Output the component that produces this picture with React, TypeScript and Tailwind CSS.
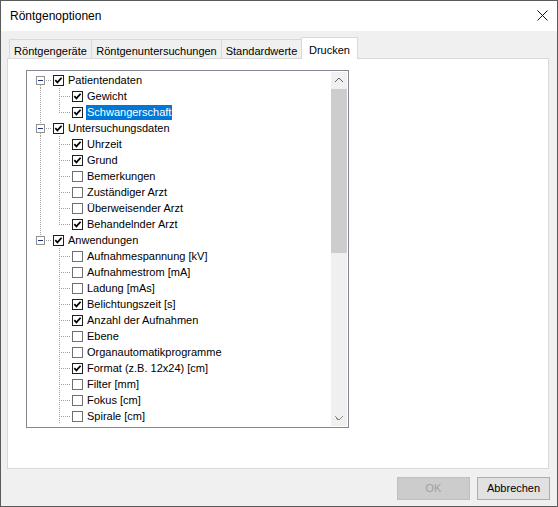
type Node = { label: string; checked: boolean; selected?: boolean; children?: Node[]; more?: boolean };

// The "Anwendungen" list scrolls on below the visible area, so its connector keeps going.
const tree: Node[] = [
  {
    label: 'Patientendaten',
    checked: true,
    children: [
      { label: 'Gewicht', checked: true },
      { label: 'Schwangerschaft', checked: true, selected: true },
    ],
  },
  {
    label: 'Untersuchungsdaten',
    checked: true,
    children: [
      { label: 'Uhrzeit', checked: true },
      { label: 'Grund', checked: true },
      { label: 'Bemerkungen', checked: false },
      { label: 'Zuständiger Arzt', checked: false },
      { label: 'Überweisender Arzt', checked: false },
      { label: 'Behandelnder Arzt', checked: true },
    ],
  },
  {
    label: 'Anwendungen',
    checked: true,
    more: true,
    children: [
      { label: 'Aufnahmespannung [kV]', checked: false },
      { label: 'Aufnahmestrom [mA]', checked: false },
      { label: 'Ladung [mAs]', checked: false },
      { label: 'Belichtungszeit [s]', checked: true },
      { label: 'Anzahl der Aufnahmen', checked: true },
      { label: 'Ebene', checked: false },
      { label: 'Organautomatikprogramme', checked: false },
      { label: 'Format (z.B. 12x24) [cm]', checked: true },
      { label: 'Filter [mm]', checked: false },
      { label: 'Fokus [cm]', checked: false },
      { label: 'Spirale [cm]', checked: false },
    ],
  },
];

const dot = { stroke: '#a0a0a0', strokeWidth: 1, strokeDasharray: '1 1' };

function CheckBox({ checked }: { checked: boolean }) {
  return (
    <div
      className={`w-[11px] h-[11px] shrink-0 bg-white border ${checked ? 'border-[#1e1e1e]' : 'border-[#707070]'}`}
    >
      {checked && (
        <svg width="9" height="9" viewBox="0 0 9 9">
          <path d="M1.3 4.2 L3.4 6.4 L7.6 1.8" fill="none" stroke="#000" strokeWidth="1.7" />
        </svg>
      )}
    </div>
  );
}

function Label({ node }: { node: Node }) {
  return (
    <span
      className={`ml-[3px] px-px h-[15px] leading-[15px] whitespace-nowrap ${
        node.selected ? 'bg-[#0078d7] text-white' : 'text-black'
      }`}
    >
      {node.label}
    </span>
  );
}

function RootRow({ node, first, last }: { node: Node; first: boolean; last: boolean }) {
  return (
    <div className="h-[16px] flex items-center">
      <svg width="26" height="16" className="shrink-0" shapeRendering="crispEdges">
        {!first && <line x1="13.5" y1="0" x2="13.5" y2="4" {...dot} />}
        {!last && <line x1="13.5" y1="13" x2="13.5" y2="16" {...dot} />}
        <rect x="9.5" y="4.5" width="8" height="8" fill="#fff" stroke="#919191" />
        <line x1="11" y1="8.5" x2="16" y2="8.5" stroke="#1f2f78" />
        <line x1="19" y1="8.5" x2="25" y2="8.5" {...dot} />
      </svg>
      <CheckBox checked={node.checked} />
      <Label node={node} />
    </div>
  );
}

function ChildRow({ node, parentLast, lastChild }: { node: Node; parentLast: boolean; lastChild: boolean }) {
  return (
    <div className="h-[16px] flex items-center">
      <svg width="45" height="16" className="shrink-0" shapeRendering="crispEdges">
        {!parentLast && <line x1="13.5" y1="0" x2="13.5" y2="16" {...dot} />}
        <line x1="32.5" y1="0" x2="32.5" y2={lastChild ? 9 : 16} {...dot} />
        <line x1="34" y1="8.5" x2="44" y2="8.5" {...dot} />
      </svg>
      <CheckBox checked={node.checked} />
      <Label node={node} />
    </div>
  );
}

function Tab({ label, active, width }: { label: string; active?: boolean; width: string }) {
  if (active) {
    return (
      <div
        className={`${width} -ml-px h-[22px] relative z-10 bg-white border border-b-0 border-[#d9d9d9] flex justify-center pt-[4px] text-[11px]`}
      >
        {label}
      </div>
    );
  }
  return (
    <div
      className={`${width} -ml-px first:ml-0 h-[19px] mb-px bg-[#f0f0f0] border border-b-0 border-[#d9d9d9] flex justify-center pt-[3px] text-[11px]`}
    >
      {label}
    </div>
  );
}

export default function App() {
  return (
    <div className="w-[558px] h-[507px] border border-[#5a5a5a] bg-[#f0f0f0] flex flex-col font-['Liberation_Sans',Arial,sans-serif] text-black select-none">
      <div className="h-[30px] bg-white flex items-center justify-between pl-[9px] pr-[9px] shrink-0">
        <span className="text-[12px]">Röntgenoptionen</span>
        <svg width="11" height="11" viewBox="0 0 11 11" className="mb-[1px]">
          <path d="M0.5 0.5 L10.5 10.5 M10.5 0.5 L0.5 10.5" stroke="#111" strokeWidth="1" />
        </svg>
      </div>

      <div className="flex-1 flex flex-col pl-[6px] pt-[6px]">
        <div className="h-[22px] flex items-end pl-[2px]">
          <Tab label="Röntgengeräte" width="w-[83px]" />
          <Tab label="Röntgenuntersuchungen" width="w-[131px]" />
          <Tab label="Standardwerte" width="w-[81px]" />
          <Tab label="Drucken" width="w-[57px]" active />
        </div>

        <div className="w-[542px] h-[411px] -mt-px bg-white border border-[#d9d9d9] pl-[18px] pt-[11px]">
          <div className="w-[323px] h-[358px] border border-[#828790] bg-white flex text-[11px]">
            <div className="flex-1 pt-px overflow-hidden">
              {tree.map((root, ri) => {
                const last = ri === tree.length - 1;
                const count = root.children?.length ?? 0;
                return (
                  <div key={root.label}>
                    <RootRow node={root} first={ri === 0} last={last} />
                    {root.children?.map((c, ci) => (
                      <ChildRow
                        key={c.label}
                        node={c}
                        parentLast={last}
                        lastChild={ci === count - 1 && !root.more}
                      />
                    ))}
                  </div>
                );
              })}
            </div>
            <div className="w-[16px] mr-px my-px bg-[#f0f0f0] flex flex-col shrink-0">
              <div className="h-[17px] flex items-center justify-center">
                <svg width="8" height="5" viewBox="0 0 8 5" shapeRendering="crispEdges">
                  <path d="M0 4 L4 0 L8 4" fill="none" stroke="#606060" strokeWidth="1.4" />
                </svg>
              </div>
              <div className="h-[164px] bg-[#cdcdcd]" />
              <div className="flex-1" />
              <div className="h-[17px] flex items-center justify-center">
                <svg width="8" height="5" viewBox="0 0 8 5" shapeRendering="crispEdges">
                  <path d="M0 1 L4 5 L8 1" fill="none" stroke="#8a8a8a" strokeWidth="1.4" />
                </svg>
              </div>
            </div>
          </div>
        </div>

        <div className="flex justify-end gap-[7px] pr-[7px] mt-[8px] text-[11px]">
          <div className="w-[73px] h-[23px] bg-[#cccccc] border border-[#bfbfbf] text-[#a0a0a0] flex items-center justify-center">
            OK
          </div>
          <div className="w-[73px] h-[23px] bg-[#e1e1e1] border border-[#adadad] flex items-center justify-center">
            Abbrechen
          </div>
        </div>
      </div>
    </div>
  );
}
